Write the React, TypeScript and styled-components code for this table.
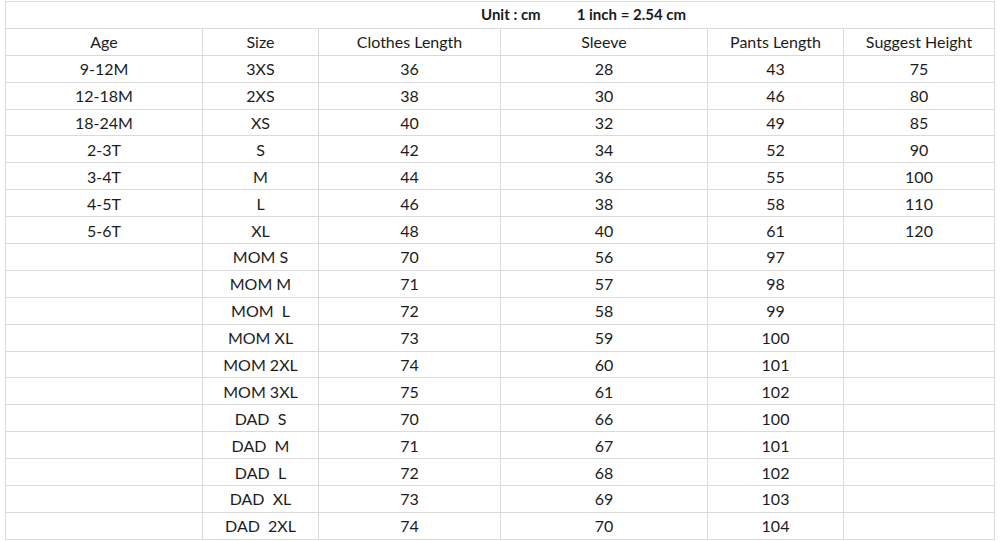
import styled, { createGlobalStyle } from 'styled-components';

const GlobalStyle = createGlobalStyle`
  html, body {
    margin: 0;
    padding: 0;
    background: #ffffff;
  }
  body {
    padding: 1px 0 0 5px;
    font-family: Lato, "Open Sans", sans-serif;
    color: #1c1c1c;
  }
`;

const SizeTable = styled.table`
  border-collapse: collapse;
  table-layout: fixed;
  width: 990px;
`;

const Cell = styled.td<{ $pre?: boolean }>`
  height: 25.9px;
  padding: 0;
  border: 1px solid #dadada;
  text-align: center;
  vertical-align: middle;
  font-size: 16px;
  line-height: 25px;
  white-space: ${(p) => (p.$pre ? 'pre' : 'nowrap')};
`;

const UnitCell = styled.td`
  height: 25.9px;
  padding: 0;
  border: 1px solid #dadada;
`;

const UnitLine = styled.div`
  display: flex;
  gap: 36px;
  padding-left: 475px;
  font-size: 15px;
  font-weight: 700;
  line-height: 25px;
  white-space: pre;
`;

const columns = [197, 116, 182, 207, 136, 151];
const headers = ['Age', 'Size', 'Clothes Length', 'Sleeve', 'Pants Length', 'Suggest Height'];

const rows: string[][] = [
  ['9-12M', '3XS', '36', '28', '43', '75'],
  ['12-18M', '2XS', '38', '30', '46', '80'],
  ['18-24M', 'XS', '40', '32', '49', '85'],
  ['2-3T', 'S', '42', '34', '52', '90'],
  ['3-4T', 'M', '44', '36', '55', '100'],
  ['4-5T', 'L', '46', '38', '58', '110'],
  ['5-6T', 'XL', '48', '40', '61', '120'],
  ['', 'MOM S', '70', '56', '97', ''],
  ['', 'MOM M', '71', '57', '98', ''],
  ['', 'MOM  L', '72', '58', '99', ''],
  ['', 'MOM XL', '73', '59', '100', ''],
  ['', 'MOM 2XL', '74', '60', '101', ''],
  ['', 'MOM 3XL', '75', '61', '102', ''],
  ['', 'DAD  S', '70', '66', '100', ''],
  ['', 'DAD  M', '71', '67', '101', ''],
  ['', 'DAD  L', '72', '68', '102', ''],
  ['', 'DAD  XL', '73', '69', '103', ''],
  ['', 'DAD  2XL', '74', '70', '104', ''],
];

export default function App() {
  return (
    <>
      <GlobalStyle />
      <SizeTable>
        <colgroup>
          {columns.map((w, i) => (
            <col key={i} style={{ width: w }} />
          ))}
        </colgroup>
        <tbody>
          <tr>
            <UnitCell colSpan={6}>
              <UnitLine>
                <span>Unit : cm</span>
                <span>1 inch = 2.54 cm</span>
              </UnitLine>
            </UnitCell>
          </tr>
          <tr>
            {headers.map((h) => (
              <Cell key={h}>{h}</Cell>
            ))}
          </tr>
          {rows.map((r, i) => (
            <tr key={i}>
              {r.map((v, j) => (
                <Cell key={j} $pre={j === 1}>
                  {v}
                </Cell>
              ))}
            </tr>
          ))}
        </tbody>
      </SizeTable>
    </>
  );
}
